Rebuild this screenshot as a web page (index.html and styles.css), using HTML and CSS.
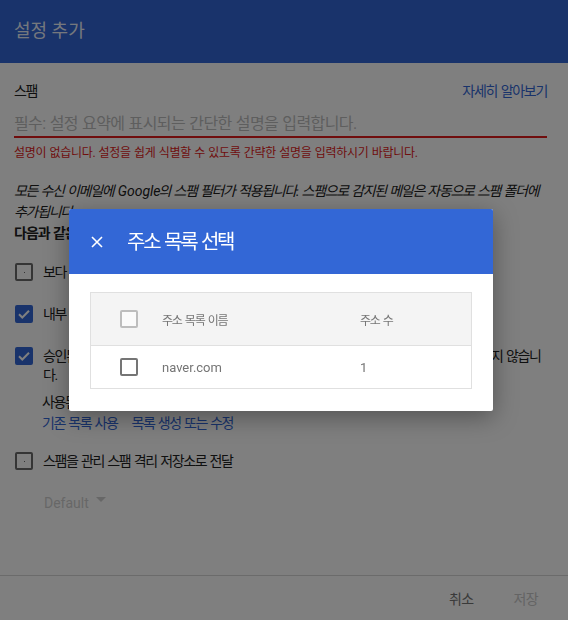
FILE: index.html
```html
<!DOCTYPE html>
<html lang="ko">
<head>
<meta charset="utf-8">
<title>설정 추가</title>
<link rel="stylesheet" href="styles.css">
</head>
<body>
<div class="page">
  <header class="topbar"><h1 class="topbar-title">설정 추가</h1></header>
  <main class="content">
    <div class="label-row">
      <span class="section-label">스팸</span>
      <a class="link" href="#">자세히 알아보기</a>
    </div>
    <div class="field"><span class="placeholder">필수: 설정 요약에 표시되는 간단한 설명을 입력합니다.</span></div>
    <div class="error">설명이 없습니다. 설정을 쉽게 식별할 수 있도록 간략한 설명을 입력하시기 바랍니다.</div>
    <p class="desc">모든 수신 이메일에 <span class="latin brand">Google</span>의 스팸 필터가 적용됩니다. 스팸으로 감지된 메일은 자동으로 스팸 폴더에 추가됩니다.</p>
    <div class="subhead">다음과 같은 경우 스팸 필터를 적용합니다.</div>

    <div class="check-row first">
      <span class="cb"></span>
      <span class="cb-label">보다 적극적인 스팸 필터링 설정을 사용합니다.</span>
    </div>
    <div class="check-row">
      <span class="cb checked"><svg viewBox="0 0 18 18" width="18" height="18"><path d="M4 9.2l3.3 3.3L14 5.8" fill="none" stroke="#fff" stroke-width="2"/></svg></span>
      <span class="cb-label">내부 발신자의 메시지는 스팸 필터를 적용하지 않습니다.</span>
    </div>
    <div class="check-row">
      <span class="cb checked"><svg viewBox="0 0 18 18" width="18" height="18"><path d="M4 9.2l3.3 3.3L14 5.8" fill="none" stroke="#fff" stroke-width="2"/></svg></span>
      <span class="cb-label">승인된 발신자 목록에 있는 주소에서 수신되는 이메일 메시지에서는 스팸 필터를 적용하지 않습니다.</span>
    </div>
    <div class="sub-block">
      <div class="sub-text">사용된 주소 목록: <span class="latin">naver.com</span></div>
      <div class="sub-links">
        <a class="link" href="#">기존 목록 사용</a>
        <a class="link" href="#">목록 생성 또는 수정</a>
      </div>
    </div>
    <div class="check-row fourth">
      <span class="cb"></span>
      <span class="cb-label">스팸을 관리 스팸 격리 저장소로 전달</span>
    </div>
    <div class="select">
      <span>Default</span>
      <span class="caret"></span>
    </div>
  </main>
  <footer class="actions">
    <button class="btn">취소</button>
    <button class="btn disabled">저장</button>
  </footer>
</div>

<div class="scrim"></div>

<div class="dialog">
  <div class="dialog-head">
    <svg class="close" viewBox="0 0 12 12" width="12" height="12"><path d="M1 1L11 11M11 1L1 11" stroke="#fff" stroke-width="1.6" fill="none"/></svg>
    <span class="dialog-title">주소 목록 선택</span>
  </div>
  <div class="dialog-body">
    <div class="table">
      <div class="tr thead">
        <div class="td cbcell"><span class="tcb light"></span></div>
        <div class="td">주소 목록 이름</div>
        <div class="td">주소 수</div>
      </div>
      <div class="tr">
        <div class="td cbcell"><span class="tcb"></span></div>
        <div class="td latin">naver.com</div>
        <div class="td">1</div>
      </div>
    </div>
  </div>
</div>
</body>
</html>
```

FILE: styles.css
```css
* { box-sizing: border-box; }
html, body { margin: 0; padding: 0; }
body {
  font-family: Roboto, "Noto Sans CJK KR", sans-serif;
  color: #212121;
  background: #fff;
  width: 568px;
  height: 620px;
  overflow: hidden;
}
.latin { letter-spacing: normal; word-spacing: normal; }
.brand { margin: 0 -2px 0 1px; }
.page {
  height: 620px;
  display: flex;
  flex-direction: column;
}
.topbar {
  height: 63px;
  background: #3367d6;
  display: flex;
  align-items: center;
  padding-left: 14px;
  flex: none;
}
.topbar-title {
  margin: 0;
  font-size: 18px;
  font-weight: 400;
  color: rgba(255,255,255,0.92);
  line-height: 24px;
  margin-top: -2px;
}
.content {
  flex: 1;
  padding: 18px 21px 0 14px;
}
.label-row {
  display: flex;
  justify-content: space-between;
  line-height: 20px;
  font-size: 14px;
  letter-spacing: -1.3px;
  word-spacing: 1.4px;
}
.link {
  color: #3367d6;
  text-decoration: none;
  font-size: 14px;
}
.field {
  margin-top: 12px;
  line-height: 22px;
  padding-bottom: 1px;
  border-bottom: 2px solid #e01b1b;
  font-size: 16px;
  letter-spacing: -0.6px;
  word-spacing: 0.8px;
}
.placeholder { color: #bdbdbd; }
.error {
  margin-top: 7px;
  font-size: 12px;
  line-height: 16px;
  color: #e01b1b;
  letter-spacing: -0.3px;
  word-spacing: 0.6px;
}
.desc {
  margin: 20px 0 0;
  font-size: 14px;
  line-height: 21px;
  font-style: italic;
  letter-spacing: -1.3px;
  word-spacing: 1.2px;
}
.subhead {
  font-size: 14px;
  line-height: 21px;
  font-weight: 700;
  letter-spacing: -1px;
  word-spacing: 1px;
}
.check-row {
  display: flex;
  align-items: flex-start;
  gap: 10px;
  font-size: 14px;
  line-height: 19px;
  margin-top: 23px;
  letter-spacing: -1.4px;
  word-spacing: 1.4px;
}
.check-row.first { margin-top: 19px; }
.check-row.fourth { margin-top: 18px; }
.cb {
  flex: none;
  width: 18px;
  height: 18px;
  margin-left: 1px;
  border: 2px solid #6a6a6a;
  border-radius: 2px;
  position: relative;
  display: flex;
  align-items: center;
  justify-content: center;
}
.cb::after {
  content: "";
  width: 1px;
  height: 1px;
  background: #6a6a6a;
}
.cb.checked {
  background: #3367d6;
  border-color: #3367d6;
}
.cb.checked::after { display: none; }
.cb.checked svg { position: absolute; left: -2px; top: -2px; }
.sub-block {
  padding-left: 28px;
  margin-top: 7px;
  font-size: 14px;
  line-height: 21px;
  letter-spacing: -1.4px;
  word-spacing: 1.2px;
}
.sub-links {
  display: flex;
  gap: 14px;
}
.select {
  margin-top: 22px;
  padding-left: 30px;
  font-size: 14px;
  line-height: 20px;
  color: #cfcfcf;
  display: flex;
  align-items: center;
  gap: 7px;
}
.caret {
  width: 0;
  height: 0;
  border-left: 5px solid transparent;
  border-right: 5px solid transparent;
  border-top: 5px solid #cfcfcf;
  margin-top: -8px;
}
.actions {
  flex: none;
  height: 45px;
  border-top: 1px solid #d6d6d6;
  display: flex;
  justify-content: flex-end;
  align-items: center;
  padding-right: 30px;
  gap: 40px;
}
.btn {
  border: 0;
  background: none;
  padding: 0;
  font-family: inherit;
  font-size: 14px;
  letter-spacing: -0.6px;
  color: #757575;
}
.btn.disabled { color: #c8c8c8; }

.scrim {
  position: fixed;
  inset: 0;
  background: rgba(0,0,0,0.5);
}

.dialog {
  position: absolute;
  left: 69px;
  top: 209px;
  width: 424px;
  background: #fff;
  border-radius: 2px;
  box-shadow: 0 6px 24px rgba(0,0,0,0.35);
  overflow: hidden;
}
.dialog-head {
  height: 65px;
  background: #3367d6;
  display: flex;
  align-items: center;
  padding-left: 22px;
  gap: 24px;
  color: #fff;
}
.close { flex: none; }
.dialog-title {
  font-size: 20px;
  line-height: 26px;
  letter-spacing: -2.2px;
  word-spacing: 1.8px;
}
.dialog-body {
  padding: 18px 21px 22px 21px;
}
.table {
  border: 1px solid #e0e0e0;
}
.tr {
  display: grid;
  grid-template-columns: 71px 198px 1fr;
  align-items: center;
  height: 42px;
  font-size: 13px;
  color: #757575;
}
.tr.thead {
  height: 53px;
  background: #f4f4f4;
  border-bottom: 1px solid #e0e0e0;
  font-size: 12px;
  letter-spacing: -1.2px;
  word-spacing: 1.4px;
}
.cbcell {
  padding-left: 29px;
  display: flex;
}
.tcb {
  width: 18px;
  height: 18px;
  border: 2px solid #757575;
  border-radius: 2px;
}
.tcb.light {
  border-color: #bdbdbd;
  background: #fafafa;
}
```
